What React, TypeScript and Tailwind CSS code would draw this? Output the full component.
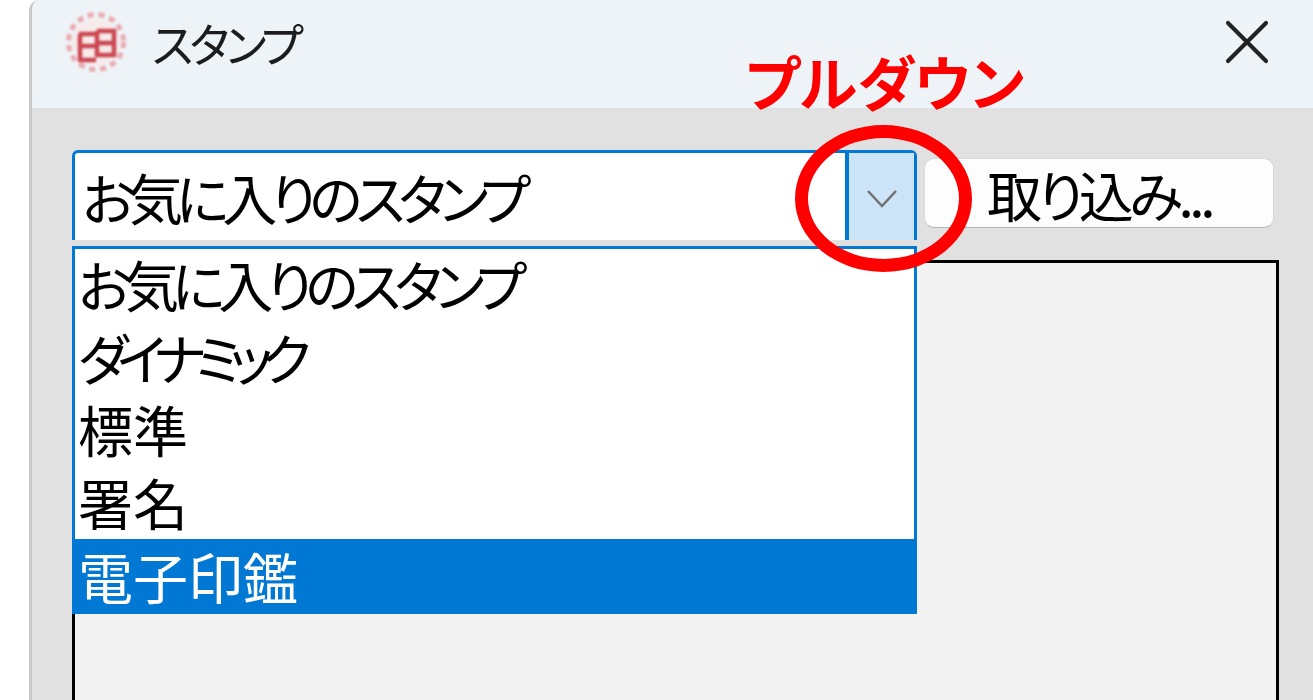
import { X } from 'lucide-react'

const cjk = { fontFamily: '"Noto Sans CJK JP", sans-serif' }

const options = [
  { label: 'お気に入りのスタンプ', cls: 'tracking-[-6.8px]' },
  { label: 'ダイナミック', cls: 'tracking-[-11px]' },
  { label: '標準', cls: '' },
  { label: '署名', cls: '' },
]

function StampIcon() {
  return (
    <svg width="64" height="64" viewBox="0 0 64 64" className="blur-[0.8px]">
      <circle cx="32" cy="32" r="23" fill="#f6eaea" />
      <circle cx="32" cy="32" r="27.5" fill="none" stroke="#eba9ad" strokeWidth="5" strokeDasharray="6 5" />
      <path d="M15 24 H32 M15 36 H32 M16 24 V50 M14 50 H32 M33 21 H50 V45 H33 V21 M34 33 H49" fill="none" stroke="#cb4650" strokeWidth="4.5" />
    </svg>
  )
}

export default function App() {
  return (
    <div className="relative h-[700px] w-full overflow-hidden bg-white blur-[0.5px] [font-feature-settings:'palt']" style={cjk}>
      <div className="ml-[29px] flex h-[760px] flex-col overflow-hidden rounded-tl-[10px] border-l-[3px] border-[#c9c9c9] bg-[#e1e1e1]">
        <div className="flex h-[108px] shrink-0 items-center bg-[#eef3f8] pl-[32px] pr-[28px] pb-[24px]">
          <StampIcon />
          <span className="ml-[24px] text-[46px] leading-none tracking-[-4px] text-[#1c1c1c]">スタンプ</span>
          <X className="ml-auto h-[76px] w-[76px] text-[#222]" strokeWidth={1.3} />
        </div>

        <div className="flex flex-1 flex-col pl-[40px] pr-[34px] pt-[42px]">
          <div className="flex items-start">
            <div className="flex h-[90px] w-[845px] shrink-0 rounded-t-[6px] border-x-[3px] border-t-[3px] border-[#0078d4] bg-white">
              <span className="flex-1 pl-[7px] pt-[11px] text-[55px] leading-[64px] tracking-[-6.8px] text-black">お気に入りのスタンプ</span>
              <div className="flex w-[69px] items-center justify-center border-l-[4px] border-[#0078d4] bg-[#cce4f7] pt-[5px]">
                <svg width="32" height="20" viewBox="0 0 32 20">
                  <path d="M2 2 L16 17 L30 2" fill="none" stroke="#707070" strokeWidth="2.5" />
                </svg>
              </div>
            </div>
            <button className="ml-[7px] mt-[8px] h-[70px] w-[350px] rounded-[10px] border border-[#d9d9d9] border-b-[#b5b5b5] bg-[#fdfdfd] text-center text-[55px] leading-[64px] tracking-[-4.5px] text-black">
              取り込み...
            </button>
          </div>
          <div className="mt-[20px] flex-1 border-[3px] border-black bg-[#f3f3f3]" />
        </div>
      </div>

      <div className="absolute left-[72px] top-[246px] w-[845px] border-x-[3px] border-t-[3px] border-[#0078d4] bg-white text-[55px] text-black">
        {options.map((o) => (
          <div key={o.label} className={`h-[72.5px] pl-[3px] leading-[68px] ${o.cls}`}>
            {o.label}
          </div>
        ))}
        <div className="-mx-[3px] h-[75px] bg-[#0078d4] pl-[6px] pt-[2px] leading-[68px] text-white">電子印鑑</div>
      </div>

      <span className="absolute left-[745px] top-[41px] text-[59px] font-bold leading-[80px] text-[#ff0000]">プルダウン</span>
      <div className="absolute left-[795px] top-[125px] h-[147px] w-[177px] rounded-[50%] border-[13px] border-[#ff0000]" />
    </div>
  )
}
